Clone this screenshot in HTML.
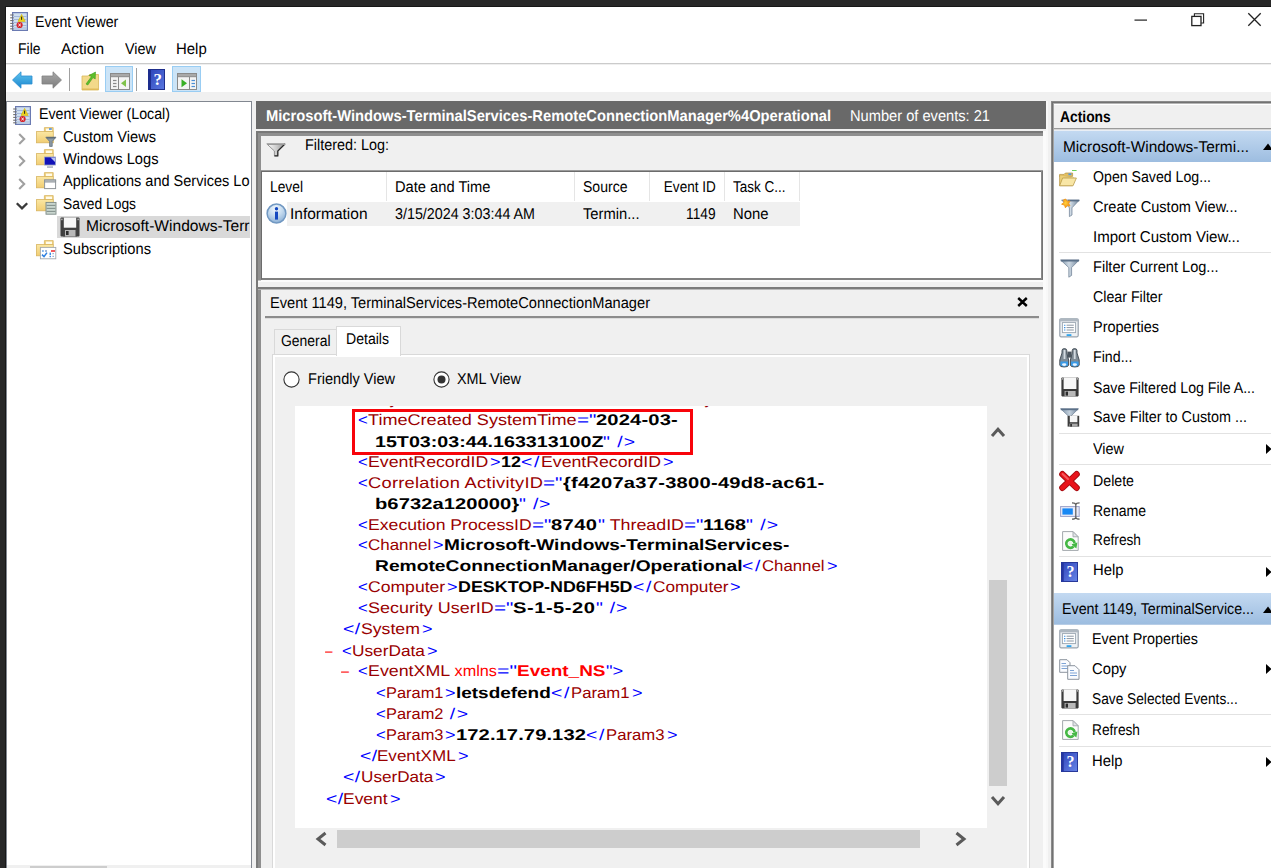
<!DOCTYPE html>
<html><head><meta charset="utf-8"><title>Event Viewer</title>
<style>
html,body{margin:0;padding:0;overflow:hidden}
#w{position:absolute;left:0;top:0;width:1271px;height:868px;overflow:hidden}
body{width:1271px;height:868px;overflow:hidden;background:#282828;position:relative;
 font-family:"Liberation Sans", sans-serif;font-size:15.6px;color:#000}
.b{position:absolute;box-sizing:border-box}
.i{position:absolute;overflow:visible}
.t{position:absolute;white-space:pre;text-rendering:geometricPrecision}
</style></head>
<body>
<div id="w">
<div class="b" style="left:5px;top:6px;width:1266px;height:1px;background:#171717;"></div>
<div class="b" style="left:5px;top:6px;width:1px;height:862px;background:#171717;"></div>
<div class="b" style="left:6px;top:7px;width:1265px;height:85px;background:#ffffff;"></div>
<div class="b" style="left:6px;top:92px;width:1265px;height:776px;background:#f0f0f0;"></div>
<div class="b" style="left:6px;top:63px;width:1265px;height:1px;background:#cbcbcb;"></div>
<div class="b" style="left:6px;top:64px;width:1265px;height:1px;background:#efefef;"></div>
<div class="b" style="left:105px;top:66px;width:28px;height:26px;background:#cce4f7;border:1px solid #99cdf3;"></div>
<div class="b" style="left:172px;top:66px;width:29px;height:26px;background:#cce4f7;border:1px solid #99cdf3;"></div>
<div class="b" style="left:69px;top:68px;width:1px;height:23px;background:#a0a0a0;"></div>
<div class="b" style="left:136px;top:68px;width:1px;height:23px;background:#a0a0a0;"></div>
<div class="b" style="left:6px;top:101px;width:246px;height:770px;background:#ffffff;border:1px solid #828790;"></div>
<div class="b" style="left:57px;top:216px;width:193px;height:22px;background:#d9d9d9;"></div>
<div class="b" style="left:7px;top:865px;width:244px;height:3px;background:#f0f0f0;"></div>
<div class="b" style="left:30px;top:866px;width:77px;height:2px;background:#cdcdcd;"></div>
<div class="b" style="left:256px;top:101px;width:790px;height:28px;background:#696969;"></div>
<div class="b" style="left:1043px;top:131px;width:3px;height:737px;background:#fbfbfb;"></div>
<div class="b" style="left:256px;top:131px;width:787px;height:149px;background:#787878;"></div>
<div class="b" style="left:258px;top:133px;width:785px;height:147px;background:#8f8f8f;"></div>
<div class="b" style="left:261px;top:136px;width:782px;height:144px;background:#f0f0f0;"></div>
<div class="b" style="left:256px;top:280px;width:790px;height:2px;background:#fbfbfb;"></div>
<div class="b" style="left:256px;top:280px;width:2px;height:8px;background:#787878;"></div>
<div class="b" style="left:258px;top:280px;width:3px;height:1px;background:#c4c4c4;"></div>
<div class="b" style="left:261px;top:170px;width:782px;height:110px;background:#ffffff;border:1px solid #6c6c6c;border-bottom-color:#808080;border-right-color:#757575;"></div>
<div class="b" style="left:261px;top:170px;width:782px;height:1px;background:#9a9a9a;"></div>
<div class="b" style="left:262px;top:171px;width:780px;height:1px;background:#6c6c6c;"></div>
<div class="b" style="left:262px;top:278px;width:780px;height:1px;background:#808080;"></div>
<div class="b" style="left:1041px;top:171px;width:1px;height:108px;background:#8a8a8a;"></div>
<div class="b" style="left:386px;top:172px;width:1px;height:29px;background:#e5e5e5;"></div>
<div class="b" style="left:574px;top:172px;width:1px;height:29px;background:#e5e5e5;"></div>
<div class="b" style="left:649px;top:172px;width:1px;height:29px;background:#e5e5e5;"></div>
<div class="b" style="left:724px;top:172px;width:1px;height:29px;background:#e5e5e5;"></div>
<div class="b" style="left:799px;top:172px;width:1px;height:29px;background:#e5e5e5;"></div>
<div class="b" style="left:287px;top:202px;width:513px;height:24px;background:#f0f0f0;"></div>
<div class="b" style="left:256px;top:287px;width:787px;height:590px;background:#7b7b7b;"></div>
<div class="b" style="left:258px;top:289px;width:785px;height:590px;background:#8f8f8f;"></div>
<div class="b" style="left:258px;top:289px;width:785px;height:1px;background:#b2b2b2;"></div>
<div class="b" style="left:261px;top:290px;width:782px;height:590px;background:#f0f0f0;"></div>
<div class="b" style="left:261px;top:289px;width:782px;height:1px;background:#b9b9b9;"></div>
<div class="b" style="left:265px;top:316px;width:774px;height:2px;background:#8c8c8c;"></div>
<div class="b" style="left:265px;top:318px;width:774px;height:1px;background:#dcdcdc;"></div>
<div class="b" style="left:272px;top:354px;width:758px;height:520px;background:#ffffff;border:1px solid #d9d9d9;"></div>
<div class="b" style="left:275px;top:357px;width:752px;height:520px;background:#f0f0f0;"></div>
<div class="b" style="left:274px;top:329px;width:63px;height:25px;background:#f0f0f0;border:1px solid #d9d9d9;border-bottom:none;"></div>
<div class="b" style="left:336px;top:326px;width:65px;height:30px;background:#ffffff;border:1px solid #d9d9d9;border-bottom:none;"></div>
<div class="b" style="left:295px;top:406px;width:692px;height:422px;background:#ffffff;"></div>
<div class="b" style="left:987px;top:406px;width:21px;height:422px;background:#f0f0f0;"></div>
<div class="b" style="left:989px;top:580px;width:18px;height:206px;background:#cdcdcd;"></div>
<div class="b" style="left:295px;top:828px;width:713px;height:21px;background:#f0f0f0;"></div>
<div class="b" style="left:337px;top:830px;width:583px;height:18px;background:#cdcdcd;"></div>
<div class="b" style="left:352px;top:409px;width:341px;height:46px;border:3px solid #f8040a;"></div>
<div class="b" style="left:1046px;top:101px;width:2px;height:767px;background:#f8f8f8;"></div>
<div class="b" style="left:1051px;top:101px;width:230px;height:780px;background:#8a8a8a;"></div>
<div class="b" style="left:1052px;top:102px;width:230px;height:780px;background:#727272;"></div>
<div class="b" style="left:1054px;top:104px;width:230px;height:780px;background:#ffffff;"></div>
<div class="b" style="left:1053px;top:103px;width:1px;height:780px;background:#a4a4a4;"></div>
<div class="b" style="left:1054px;top:103px;width:230px;height:1px;background:#b4b4b4;"></div>
<div class="b" style="left:1054px;top:105px;width:220px;height:23px;background:#f0f0f0;"></div>
<div class="b" style="left:1054px;top:128px;width:220px;height:1px;background:#9a9a9a;"></div>
<div class="b" style="left:1054px;top:129px;width:220px;height:1px;background:#d6d6d6;"></div>
<div class="b" style="left:1054px;top:130px;width:220px;height:1px;background:#e9eef5;"></div>
<div class="b" style="left:1054px;top:131px;width:220px;height:31px;background:linear-gradient(#c3d9f1,#9dbde0);"></div>
<div class="b" style="left:1054px;top:593px;width:220px;height:31px;background:linear-gradient(#c3d9f1,#9dbde0);"></div>
<div class="b" style="left:1054px;top:624px;width:220px;height:1px;background:#b7cde6;"></div>
<div class="b" style="left:1059px;top:252px;width:215px;height:1px;background:#e2e2e2;"></div>
<div class="b" style="left:1059px;top:433px;width:215px;height:1px;background:#e2e2e2;"></div>
<div class="b" style="left:1059px;top:464px;width:215px;height:1px;background:#e2e2e2;"></div>
<div class="b" style="left:1059px;top:556px;width:215px;height:1px;background:#e2e2e2;"></div>
<div class="b" style="left:1059px;top:714px;width:215px;height:1px;background:#e2e2e2;"></div>
<div class="b" style="left:1059px;top:746px;width:215px;height:1px;background:#e2e2e2;"></div>

<svg class="i" style="left:9.6px;top:11.8px" width="18" height="19" viewBox="0 0 18 19">
<rect x="2.6" y="0.6" width="14.8" height="17.8" fill="#cfdff0" stroke="#6a7ab2" stroke-width="1.2"/>
<g stroke="#a3b8da" stroke-width="1"><line x1="4" y1="4.5" x2="16.6" y2="4.5"/><line x1="4" y1="7.5" x2="16.6" y2="7.5"/><line x1="4" y1="10.5" x2="16.6" y2="10.5"/><line x1="4" y1="13.5" x2="16.6" y2="13.5"/><line x1="4" y1="16" x2="16.6" y2="16"/></g>
<g stroke="#6f6f6f" stroke-width="1.1"><line x1="0.2" y1="3" x2="3.6" y2="3"/><line x1="0.2" y1="5.8" x2="3.6" y2="5.8"/><line x1="0.2" y1="8.6" x2="3.6" y2="8.6"/><line x1="0.2" y1="11.4" x2="3.6" y2="11.4"/><line x1="0.2" y1="14.2" x2="3.6" y2="14.2"/><line x1="0.2" y1="16.8" x2="3.6" y2="16.8"/></g>
<path d="M11.6 2.4 L15.2 9.4 L8 9.4 Z" fill="#ecd31f" stroke="#cfb400" stroke-width="0.6" stroke-linejoin="round"/>
<rect x="11.1" y="4.6" width="1" height="3.2" fill="#222"/>
<circle cx="9.6" cy="13" r="3.1" fill="#d6262c"/>
<path d="M8.4 11.8 L10.8 14.2 M10.8 11.8 L8.4 14.2" stroke="#fff" stroke-width="1"/>
</svg>
<svg class="i" style="left:13.4px;top:105.6px" width="18" height="19" viewBox="0 0 18 19">
<rect x="2.6" y="0.6" width="14.8" height="17.8" fill="#cfdff0" stroke="#6a7ab2" stroke-width="1.2"/>
<g stroke="#a3b8da" stroke-width="1"><line x1="4" y1="4.5" x2="16.6" y2="4.5"/><line x1="4" y1="7.5" x2="16.6" y2="7.5"/><line x1="4" y1="10.5" x2="16.6" y2="10.5"/><line x1="4" y1="13.5" x2="16.6" y2="13.5"/><line x1="4" y1="16" x2="16.6" y2="16"/></g>
<g stroke="#6f6f6f" stroke-width="1.1"><line x1="0.2" y1="3" x2="3.6" y2="3"/><line x1="0.2" y1="5.8" x2="3.6" y2="5.8"/><line x1="0.2" y1="8.6" x2="3.6" y2="8.6"/><line x1="0.2" y1="11.4" x2="3.6" y2="11.4"/><line x1="0.2" y1="14.2" x2="3.6" y2="14.2"/><line x1="0.2" y1="16.8" x2="3.6" y2="16.8"/></g>
<path d="M11.6 2.4 L15.2 9.4 L8 9.4 Z" fill="#ecd31f" stroke="#cfb400" stroke-width="0.6" stroke-linejoin="round"/>
<rect x="11.1" y="4.6" width="1" height="3.2" fill="#222"/>
<circle cx="9.6" cy="13" r="3.1" fill="#d6262c"/>
<path d="M8.4 11.8 L10.8 14.2 M10.8 11.8 L8.4 14.2" stroke="#fff" stroke-width="1"/>
</svg>
<svg class="i" style="left:1134.4px;top:13.4px" width="13" height="13" viewBox="0 0 13 13"><rect x="0.5" y="6.5" width="12.5" height="1.2" fill="#222"/></svg>
<svg class="i" style="left:1190.8px;top:13px" width="14" height="14" viewBox="0 0 14 14"><path d="M3.4 3.2 V0.8 H12.6 V10 H10.2" fill="none" stroke="#222" stroke-width="1.1"/>
<rect x="0.8" y="3.4" width="9.2" height="9.2" fill="none" stroke="#222" stroke-width="1.3"/></svg>
<svg class="i" style="left:1248px;top:13px" width="13" height="13" viewBox="0 0 13 13"><path d="M0.3 0.3 L12.7 12.7 M12.7 0.3 L0.3 12.7" stroke="#222" stroke-width="1.3"/></svg>
<svg class="i" style="left:12px;top:71px" width="21" height="18" viewBox="0 0 21 18"><defs><linearGradient id="gb" x1="0" y1="0" x2="0" y2="1"><stop offset="0" stop-color="#5fc4ee"/><stop offset="1" stop-color="#1b86cf"/></linearGradient></defs>
<path d="M0.5 9 L9 0.8 V5 H20 V13 H9 V17.2 Z" fill="url(#gb)" stroke="#2b8ed0" stroke-width="0.8" stroke-linejoin="round"/></svg>
<svg class="i" style="left:41px;top:71px" width="21" height="18" viewBox="0 0 21 18"><defs><linearGradient id="gf" x1="0" y1="0" x2="0" y2="1"><stop offset="0" stop-color="#a8a8a8"/><stop offset="1" stop-color="#7d7d7d"/></linearGradient></defs>
<path d="M20.5 9 L12 0.8 V5 H1 V13 H12 V17.2 Z" fill="url(#gf)" stroke="#808080" stroke-width="0.8" stroke-linejoin="round"/></svg>
<svg class="i" style="left:80.5px;top:69.6px" width="19" height="21" viewBox="0 0 19 21"><path d="M1 6 H7 L8.5 4.5 H17.5 V20 H1 Z" fill="#f3d98a" stroke="#d9b95c" stroke-width="0.8"/>
<path d="M1 18.5 H17.5 V20 H1 Z" fill="#e0bb5a"/>
<path d="M5 14 L10.5 6.5 L8 5.5 L14.5 2 L14.2 9 L12 7.6 L6.8 15 Z" fill="#5cbf2a" stroke="#3f9a1c" stroke-width="0.6"/></svg>
<svg class="i" style="left:109.6px;top:72.6px" width="20" height="17" viewBox="0 0 20 17"><rect x="0.5" y="0.5" width="19" height="16" fill="#f4f4f4" stroke="#8a8a8a"/>
<rect x="0.5" y="0.5" width="19" height="3.2" fill="#a9a9a9" stroke="#8a8a8a"/>
<line x1="8.5" y1="4" x2="8.5" y2="16" stroke="#8a8a8a"/>
<g stroke="#8a8a8a" stroke-width="1.2"><line x1="3" y1="7.5" x2="6.5" y2="7.5"/><line x1="3" y1="10.5" x2="6.5" y2="10.5"/><line x1="3" y1="13.5" x2="6.5" y2="13.5"/></g>
<path d="M16 6.5 V14 L11 10.2 Z" fill="#7fc24a"/></svg>
<svg class="i" style="left:148px;top:69px" width="17" height="21" viewBox="0 0 17 21"><defs><linearGradient id="gh" x1="0" y1="0" x2="1" y2="1"><stop offset="0" stop-color="#2a42b8"/><stop offset="1" stop-color="#5a78e0"/></linearGradient></defs>
<rect x="0.5" y="0.5" width="16" height="20" fill="url(#gh)" stroke="#1f2f8c"/>
<rect x="0.5" y="0.5" width="2.5" height="20" fill="#1c2c8e"/>
<text x="9.8" y="16.4" font-family="Liberation Serif, serif" font-weight="700" font-size="17" fill="#fff" text-anchor="middle">?</text></svg>
<svg class="i" style="left:177px;top:72.6px" width="20" height="17" viewBox="0 0 20 17"><rect x="0.5" y="0.5" width="19" height="16" fill="#f4f4f4" stroke="#8a8a8a"/>
<rect x="0.5" y="0.5" width="19" height="3.2" fill="#a9a9a9" stroke="#8a8a8a"/>
<line x1="12.5" y1="4" x2="12.5" y2="16" stroke="#8a8a8a"/>
<g stroke="#4b8fd6" stroke-width="1.2"><line x1="14.5" y1="7.5" x2="18" y2="7.5"/><line x1="14.5" y1="10.5" x2="18" y2="10.5"/><line x1="14.5" y1="13.5" x2="18" y2="13.5"/></g>
<path d="M4.5 6.2 V14.2 L10 10.2 Z" fill="#39b026"/></svg>
<svg class="i" style="left:18px;top:132.5px" width="8" height="12" viewBox="0 0 8 12"><path d="M1.2 1 L6.2 6 L1.2 11" fill="none" stroke="#a0a0a0" stroke-width="2.1"/></svg>
<svg class="i" style="left:18px;top:155.2px" width="8" height="12" viewBox="0 0 8 12"><path d="M1.2 1 L6.2 6 L1.2 11" fill="none" stroke="#a0a0a0" stroke-width="2.1"/></svg>
<svg class="i" style="left:18px;top:178px" width="8" height="12" viewBox="0 0 8 12"><path d="M1.2 1 L6.2 6 L1.2 11" fill="none" stroke="#a0a0a0" stroke-width="2.1"/></svg>
<svg class="i" style="left:15.6px;top:201.6px" width="12" height="8" viewBox="0 0 12 8"><path d="M0.8 1.2 L6 6.4 L11.2 1.2" fill="none" stroke="#3a3a3a" stroke-width="2.3"/></svg>
<svg class="i" style="left:36px;top:127px" width="22" height="21" viewBox="0 0 22 21"><defs><linearGradient id="gfo" x1="0" y1="0" x2="0" y2="1"><stop offset="0" stop-color="#fbe7a3"/><stop offset="1" stop-color="#f1cd72"/></linearGradient></defs>
<path d="M8.4 4.6 V0.6 H17.2 V4.6 Z" fill="#f1d384" stroke="#d8b560" stroke-width="0.8"/>
<rect x="10" y="1.6" width="6" height="2.6" fill="#fffbea"/>
<rect x="0.4" y="4.6" width="16.9" height="11.2" fill="url(#gfo)" stroke="#d8b560" stroke-width="0.8"/><rect x="13" y="1.2" width="2.8" height="1.6" fill="#4f8fe0"/>
<path d="M9.8 10.2 H20 L16.2 14.4 V19.4 H13.6 V14.4 Z" fill="#8c9aa6" stroke="#66747f" stroke-width="0.8" stroke-linejoin="round"/>
<path d="M10.5 10.8 H19.4" stroke="#5a6873" stroke-width="1.3"/></svg>
<svg class="i" style="left:36px;top:149.4px" width="22" height="22" viewBox="0 0 22 22"><defs><linearGradient id="gfo" x1="0" y1="0" x2="0" y2="1"><stop offset="0" stop-color="#fbe7a3"/><stop offset="1" stop-color="#f1cd72"/></linearGradient></defs>
<path d="M8.4 4.6 V0.6 H17.2 V4.6 Z" fill="#f1d384" stroke="#d8b560" stroke-width="0.8"/>
<rect x="10" y="1.6" width="6" height="2.6" fill="#fffbea"/>
<rect x="0.4" y="4.6" width="16.9" height="11.2" fill="url(#gfo)" stroke="#d8b560" stroke-width="0.8"/>
<rect x="8.6" y="8" width="10.8" height="8" fill="#1212b8" stroke="#8f9cc8" stroke-width="0.8"/>
<path d="M14.5 8.4 H19 V13 Z" fill="#b9c4f2"/>
<rect x="11" y="17.4" width="6" height="1.3" fill="#9aa3b5"/></svg>
<svg class="i" style="left:36px;top:172px" width="22" height="21" viewBox="0 0 22 21"><defs><linearGradient id="gfo" x1="0" y1="0" x2="0" y2="1"><stop offset="0" stop-color="#fbe7a3"/><stop offset="1" stop-color="#f1cd72"/></linearGradient></defs>
<path d="M8.4 4.6 V0.6 H17.2 V4.6 Z" fill="#f1d384" stroke="#d8b560" stroke-width="0.8"/>
<rect x="10" y="1.6" width="6" height="2.6" fill="#fffbea"/>
<rect x="0.4" y="4.6" width="16.9" height="11.2" fill="url(#gfo)" stroke="#d8b560" stroke-width="0.8"/>
<rect x="8.6" y="8" width="11" height="8.6" fill="#ffffff" stroke="#8e9499" stroke-width="1"/>
<rect x="8.6" y="8" width="11" height="2" fill="#c4cace" stroke="#8e9499" stroke-width="1"/></svg>
<svg class="i" style="left:36px;top:195px" width="22" height="22" viewBox="0 0 22 22"><defs><linearGradient id="gfo" x1="0" y1="0" x2="0" y2="1"><stop offset="0" stop-color="#fbe7a3"/><stop offset="1" stop-color="#f1cd72"/></linearGradient></defs>
<path d="M8.4 4.6 V0.6 H17.2 V4.6 Z" fill="#f1d384" stroke="#d8b560" stroke-width="0.8"/>
<rect x="10" y="1.6" width="6" height="2.6" fill="#fffbea"/>
<rect x="0.4" y="4.6" width="16.9" height="11.2" fill="url(#gfo)" stroke="#d8b560" stroke-width="0.8"/>
<rect x="10" y="7.4" width="10" height="11.8" fill="#c9d6cf" stroke="#7d8a86" stroke-width="0.9"/>
<g stroke="#85938e" stroke-width="1.1"><line x1="10.6" y1="10.4" x2="19.4" y2="10.4"/><line x1="10.6" y1="13.4" x2="19.4" y2="13.4"/><line x1="10.6" y1="16.4" x2="19.4" y2="16.4"/></g></svg>
<svg class="i" style="left:59.6px;top:217.2px" width="20" height="20" viewBox="0 0 20 20"><rect x="0.5" y="0.5" width="19" height="19" rx="1" fill="#3f3f3f"/>
<rect x="3.8" y="0.5" width="12.4" height="10.2" fill="#f6f6f6"/>
<rect x="3.2" y="12.6" width="13.6" height="6.9" fill="#454545"/>
<rect x="5" y="13" width="10.5" height="6.5" fill="#b8b8b8"/>
<rect x="6" y="14" width="2.6" height="4" fill="#2e2e2e"/>
<rect x="1.3" y="1.6" width="1.2" height="1.6" fill="#cfcfcf"/><rect x="17.5" y="1.6" width="1.2" height="1.6" fill="#cfcfcf"/></svg>
<svg class="i" style="left:36px;top:240.4px" width="22" height="22" viewBox="0 0 22 22"><defs><linearGradient id="gfo" x1="0" y1="0" x2="0" y2="1"><stop offset="0" stop-color="#fbe7a3"/><stop offset="1" stop-color="#f1cd72"/></linearGradient></defs>
<path d="M8.4 4.6 V0.6 H17.2 V4.6 Z" fill="#f1d384" stroke="#d8b560" stroke-width="0.8"/>
<rect x="10" y="1.6" width="6" height="2.6" fill="#fffbea"/>
<rect x="0.4" y="4.6" width="16.9" height="11.2" fill="url(#gfo)" stroke="#d8b560" stroke-width="0.8"/>
<rect x="4.4" y="7.4" width="15.4" height="11.4" fill="#ffffff" stroke="#a3a8ad" stroke-width="0.9"/>
<rect x="15" y="10.2" width="4" height="1.6" fill="#ee3338"/>
<rect x="6" y="10.4" width="1.8" height="1.2" fill="#3a8ae0"/><rect x="9" y="10.4" width="2" height="1.2" fill="#5e86c0"/>
<path d="M6 14.6 L8 16.6 L11 12.6" fill="none" stroke="#2c7fe0" stroke-width="1.5"/>
<rect x="13.6" y="12.6" width="1.3" height="2.6" fill="#2c7fe0"/><rect x="13.6" y="16" width="1.3" height="1.2" fill="#2c7fe0"/>
<rect x="16.4" y="13" width="1.6" height="1.2" fill="#9db4d6"/><rect x="16.4" y="15.8" width="1.6" height="1.2" fill="#9db4d6"/></svg>
<svg class="i" style="left:265.8px;top:143.2px" width="20" height="14" viewBox="0 0 20 14"><defs><linearGradient id="gfl" x1="0" y1="0" x2="1" y2="0"><stop offset="0" stop-color="#ffffff"/><stop offset="0.55" stop-color="#c9c9c9"/><stop offset="1" stop-color="#8a8a8a"/></linearGradient></defs>
<path d="M0.8 0.9 H19.2 L11.8 8 V12.8 H8.4 V8 Z" fill="url(#gfl)" stroke="#8a8a8a" stroke-width="0.9" stroke-linejoin="round"/>
<path d="M19 1 L11.8 8 V12.8 H8.4" fill="none" stroke="#2a2a2a" stroke-width="1.2"/>
<path d="M1 1.3 H19" stroke="#9a9a9a" stroke-width="1.4"/></svg>
<svg class="i" style="left:266.4px;top:203.2px" width="21" height="21" viewBox="0 0 21 21"><defs><radialGradient id="gi" cx="0.45" cy="0.25" r="0.85"><stop offset="0" stop-color="#f2f8fd"/><stop offset="0.45" stop-color="#c3d9ee"/><stop offset="1" stop-color="#7fa6cf"/></radialGradient></defs>
<circle cx="10.5" cy="10.5" r="9.4" fill="url(#gi)" stroke="#7198c2" stroke-width="1.5"/>
<circle cx="10.5" cy="5.8" r="1.7" fill="#1448c0"/>
<rect x="9" y="8.6" width="3" height="8" fill="#1448c0"/></svg>
<svg class="i" style="left:1017px;top:297px" width="11" height="10" viewBox="0 0 11 10"><path d="M1.2 1 L9.8 9 M9.8 1 L1.2 9" stroke="#000" stroke-width="2.4"/></svg>
<svg class="i" style="left:283px;top:371px" width="17" height="17" viewBox="0 0 17 17"><circle cx="8.5" cy="8.5" r="7.6" fill="#fff" stroke="#333" stroke-width="1.1"/></svg>
<svg class="i" style="left:433px;top:371px" width="17" height="17" viewBox="0 0 17 17"><circle cx="8.5" cy="8.5" r="7.6" fill="#fff" stroke="#333" stroke-width="1.1"/><circle cx="8.5" cy="8.5" r="4" fill="#333"/></svg>
<svg class="i" style="left:991px;top:427px" width="14" height="10" viewBox="0 0 14 10"><path d="M1 9 L7 2.2 L13 9" fill="none" stroke="#5a5a5a" stroke-width="3"/></svg>
<svg class="i" style="left:991px;top:796px" width="14" height="10" viewBox="0 0 14 10"><path d="M1 1 L7 7.8 L13 1" fill="none" stroke="#5a5a5a" stroke-width="3"/></svg>
<svg class="i" style="left:315px;top:832px" width="12" height="14" viewBox="0 0 12 14"><path d="M10.5 1 L3 7 L10.5 13" fill="none" stroke="#5a5a5a" stroke-width="3"/></svg>
<svg class="i" style="left:955px;top:832px" width="12" height="14" viewBox="0 0 12 14"><path d="M1.5 1 L9 7 L1.5 13" fill="none" stroke="#5a5a5a" stroke-width="3"/></svg>
<svg class="i" style="left:1059.4px;top:170px" width="18" height="17" viewBox="0 0 18 17"><rect x="13" y="0" width="4.6" height="0.9" fill="#58d04a"/>
<path d="M0.6 4.4 H5 L6.4 3 H13.6 V6.4 H0.6 Z" fill="#e3c062" stroke="#b39140" stroke-width="0.7"/>
<rect x="9.4" y="3.4" width="3" height="1.8" fill="#4f97e6"/>
<path d="M0.6 5.4 V15.6 H13 L14.6 7.6" fill="#ecd078" stroke="#b39140" stroke-width="0.7"/>
<path d="M0.6 15.8 L3.6 8 H17.4 L14 15.8 Z" fill="#f8e6a6" stroke="#b99a48" stroke-width="0.8" stroke-linejoin="round"/></svg>
<svg class="i" style="left:1060.4px;top:199px" width="20" height="19" viewBox="0 0 20 19"><defs><linearGradient id="gfs" x1="0" y1="0" x2="1" y2="0"><stop offset="0" stop-color="#7a90a6"/><stop offset="0.5" stop-color="#cfdae4"/><stop offset="1" stop-color="#6d8299"/></linearGradient>
<radialGradient id="gst" cx="0.45" cy="0.45" r="0.6"><stop offset="0" stop-color="#ffd23a"/><stop offset="1" stop-color="#f28a12"/></radialGradient></defs>
<path d="M1.6 1 H19.4 L12 8.8 V16 L9.4 17.6 V8.8 Z" fill="url(#gfs)" stroke="#6a7d92" stroke-width="0.7" stroke-linejoin="round"/>
<path d="M8 1.6 H19.2" stroke="#5b7088" stroke-width="1.6"/>
<path d="M5.6 0 L7.2 2.2 L10 2 L8.6 4.4 L10 7 L7.2 6.6 L5.4 8.8 L4.6 6.2 L1.6 5.2 L4 3.6 L3.6 0.8 Z" fill="url(#gst)" stroke="#f2981c" stroke-width="0.9" stroke-linejoin="round"/></svg>
<svg class="i" style="left:1059.6px;top:258.8px" width="20" height="19" viewBox="0 0 20 19"><defs><linearGradient id="gfn" x1="0" y1="0" x2="1" y2="0"><stop offset="0" stop-color="#7a90a6"/><stop offset="0.45" stop-color="#cfdae4"/><stop offset="1" stop-color="#6d8299"/></linearGradient></defs>
<path d="M0.6 1 H19.2 L11.6 8.6 V16.4 L8.8 18.2 V8.6 Z" fill="url(#gfn)" stroke="#6a7d92" stroke-width="0.7" stroke-linejoin="round"/>
<path d="M0.8 1.6 H19" stroke="#5b7088" stroke-width="1.8"/></svg>
<svg class="i" style="left:1059.4px;top:318px" width="20" height="20" viewBox="0 0 20 20"><rect x="0.8" y="0.8" width="18.4" height="18" rx="1.2" fill="#eef1f4" stroke="#98a2ad" stroke-width="1.2"/>
<rect x="0.8" y="0.8" width="18.4" height="2.6" fill="#aeb7c0"/>
<rect x="3.4" y="4.6" width="13.2" height="10" fill="#ffffff" stroke="#9aa5b1" stroke-width="0.9"/>
<g stroke="#8a96a3" stroke-width="1"><line x1="7.6" y1="7.2" x2="14.8" y2="7.2"/><line x1="7.6" y1="9.6" x2="14.8" y2="9.6"/><line x1="7.6" y1="12" x2="14.8" y2="12"/></g>
<g stroke="#3a8ee0" stroke-width="1.1"><line x1="5" y1="7.2" x2="6.4" y2="7.2"/><line x1="5" y1="9.6" x2="6.4" y2="9.6"/><line x1="5" y1="12" x2="6.4" y2="12"/></g>
<rect x="7.6" y="16.2" width="4.8" height="1.8" fill="#2fa4ee"/></svg>
<svg class="i" style="left:1059.4px;top:347.8px" width="21" height="20" viewBox="0 0 21 20"><g fill="#7f8b95" stroke="#3b454e" stroke-width="0.9">
<path d="M3 2.6 Q3 0.6 5.4 0.6 Q7.8 0.6 7.8 2.6 V5 L9.6 12 V17 Q9.6 19 5.2 19 Q0.8 19 0.8 17 V12 L3 5 Z"/>
<path d="M13.2 2.6 Q13.2 0.6 15.6 0.6 Q18 0.6 18 2.6 V5 L20.2 12 V17 Q20.2 19 15.8 19 Q11.4 19 11.4 17 V12 L13.2 5 Z"/></g>
<rect x="8.4" y="3.6" width="4.2" height="6" fill="#4b555e"/>
<rect x="4.6" y="2" width="1.8" height="9" fill="#d4dbe1"/><rect x="14.8" y="2" width="1.8" height="9" fill="#d4dbe1"/>
<path d="M1.4 13.6 H9 V17 Q9 18.4 5.2 18.4 Q1.4 18.4 1.4 17 Z" fill="#3a9be8"/><path d="M12 13.6 H19.6 V17 Q19.6 18.4 15.8 18.4 Q12 18.4 12 17 Z" fill="#3a9be8"/>
<ellipse cx="5.2" cy="16.6" rx="2.2" ry="1.3" fill="#e9f4ff"/><ellipse cx="15.8" cy="16.6" rx="2.2" ry="1.3" fill="#e9f4ff"/></svg>
<svg class="i" style="left:1061px;top:377.4px" width="18" height="20" viewBox="0 0 18 20"><rect x="0.4" y="0.4" width="17.2" height="19" rx="0.8" fill="#3a3a3a"/>
<rect x="2.6" y="0.4" width="12.8" height="11.6" fill="#f7f7f7"/>
<rect x="3.6" y="14" width="11" height="5.4" fill="#b9b9b9"/>
<rect x="4.6" y="14.6" width="2.4" height="4" fill="#2c2c2c"/>
<rect x="0.9" y="1.2" width="1" height="1.4" fill="#d0d0d0"/><rect x="16.1" y="1.2" width="1" height="1.4" fill="#d0d0d0"/></svg>
<svg class="i" style="left:1059.8px;top:408px" width="20" height="19" viewBox="0 0 20 19"><defs><linearGradient id="gfv" x1="0" y1="0" x2="1" y2="0"><stop offset="0" stop-color="#7a90a6"/><stop offset="0.5" stop-color="#c3d0dc"/><stop offset="1" stop-color="#6d8299"/></linearGradient></defs>
<path d="M0.6 0.8 H18.4 L11 8 V11 H8.4 V8 Z" fill="url(#gfv)" stroke="#6a7d92" stroke-width="0.7"/>
<path d="M0.8 1.4 H18.2" stroke="#5b7088" stroke-width="1.6"/>
<rect x="7.6" y="7.8" width="11.6" height="10.8" fill="#3c3c3c"/>
<rect x="9.8" y="7.8" width="7.6" height="6.4" fill="#f6f6f6"/>
<rect x="9.4" y="15.6" width="8.2" height="3" fill="#a8a8a8"/>
<rect x="10.2" y="16" width="1.8" height="2.6" fill="#333"/></svg>
<svg class="i" style="left:1059px;top:470.8px" width="21" height="20" viewBox="0 0 21 20"><path d="M3.4 3.2 L17.6 16.8 M17.6 3.2 L3.4 16.8" stroke="#a50d12" stroke-width="6.4" stroke-linecap="round"/>
<path d="M3.4 3.2 L17.6 16.8 M17.6 3.2 L3.4 16.8" stroke="#e8141b" stroke-width="4.6" stroke-linecap="round"/>
<path d="M3.6 3 L9 8" stroke="#f45a5e" stroke-width="2" stroke-linecap="round"/></svg>
<svg class="i" style="left:1059.6px;top:501.6px" width="21" height="18" viewBox="0 0 21 18"><rect x="0.6" y="4.6" width="18.6" height="9.8" fill="#e9ebfa" stroke="#9aa0c8" stroke-width="1"/>
<rect x="2.4" y="6.4" width="10.4" height="6.2" fill="#1788f4"/>
<path d="M12 0.8 Q15.4 0.8 15.8 2.6 Q16.2 0.8 19.6 0.8 M15.8 2.4 V15.6 M12 17.2 Q15.4 17.2 15.8 15.4 Q16.2 17.2 19.6 17.2" stroke="#5a5a5a" stroke-width="1.2" fill="none"/></svg>
<svg class="i" style="left:1062px;top:530.8px" width="17" height="20" viewBox="0 0 17 20"><path d="M0.6 0.6 H11 L16.2 5.8 V19.4 H0.6 Z" fill="#fcfcfc" stroke="#a3a8ad" stroke-width="1"/>
<path d="M11 0.6 V5.8 H16.2 Z" fill="#e1e4e7" stroke="#a3a8ad" stroke-width="0.9"/>
<path d="M11.6 15.4 A4.2 4.2 0 1 1 12.6 12" fill="none" stroke="#45b845" stroke-width="2.7"/>
<path d="M9.2 13.2 L15.4 11.4 L14.4 17.4 Z" fill="#45b845"/>
<circle cx="8.4" cy="12.2" r="2" fill="#e8f6e6"/></svg>
<svg class="i" style="left:1060.6px;top:562px" width="17" height="20" viewBox="0 0 17 20"><defs><linearGradient id="ghq" x1="0" y1="0" x2="1" y2="1"><stop offset="0" stop-color="#2a42b8"/><stop offset="1" stop-color="#6a86e8"/></linearGradient></defs>
<rect x="0.5" y="0.5" width="16" height="19" fill="url(#ghq)" stroke="#27389a"/>
<rect x="0.5" y="0.5" width="2.2" height="19" fill="#2436a0"/>
<text x="9.4" y="15.4" font-family="Liberation Serif, serif" font-weight="700" font-size="16" fill="#fff" text-anchor="middle">?</text></svg>
<svg class="i" style="left:1059.4px;top:629px" width="20" height="20" viewBox="0 0 20 20"><rect x="0.8" y="0.8" width="18.4" height="18" rx="1.2" fill="#eef1f4" stroke="#98a2ad" stroke-width="1.2"/>
<rect x="0.8" y="0.8" width="18.4" height="2.6" fill="#aeb7c0"/>
<rect x="3.4" y="4.6" width="13.2" height="10" fill="#ffffff" stroke="#9aa5b1" stroke-width="0.9"/>
<g stroke="#8a96a3" stroke-width="1"><line x1="7.6" y1="7.2" x2="14.8" y2="7.2"/><line x1="7.6" y1="9.6" x2="14.8" y2="9.6"/><line x1="7.6" y1="12" x2="14.8" y2="12"/></g>
<g stroke="#3a8ee0" stroke-width="1.1"><line x1="5" y1="7.2" x2="6.4" y2="7.2"/><line x1="5" y1="9.6" x2="6.4" y2="9.6"/><line x1="5" y1="12" x2="6.4" y2="12"/></g>
<rect x="7.6" y="16.2" width="4.8" height="1.8" fill="#2fa4ee"/></svg>
<svg class="i" style="left:1059px;top:659px" width="21" height="21" viewBox="0 0 21 21"><path d="M0.7 0.7 H8 L11 3.7 V13.3 H0.7 Z" fill="#fafcff" stroke="#8c949e" stroke-width="1"/>
<g stroke="#7fa4d6" stroke-width="1"><line x1="2.5" y1="4.5" x2="7" y2="4.5"/><line x1="2.5" y1="7" x2="9" y2="7"/><line x1="2.5" y1="9.5" x2="9" y2="9.5"/></g>
<path d="M8.7 6.7 H16 L20 10.7 V20.3 H8.7 Z" fill="#fafcff" stroke="#8c949e" stroke-width="1"/>
<g stroke="#7fa4d6" stroke-width="1"><line x1="11" y1="11.5" x2="15" y2="11.5"/><line x1="11" y1="14" x2="18" y2="14"/><line x1="11" y1="16.5" x2="18" y2="16.5"/></g></svg>
<svg class="i" style="left:1061px;top:688.6px" width="18" height="20" viewBox="0 0 18 20"><rect x="0.4" y="0.4" width="17.2" height="19" rx="0.8" fill="#3a3a3a"/>
<rect x="2.6" y="0.4" width="12.8" height="11.6" fill="#f7f7f7"/>
<rect x="3.6" y="14" width="11" height="5.4" fill="#b9b9b9"/>
<rect x="4.6" y="14.6" width="2.4" height="4" fill="#2c2c2c"/>
<rect x="0.9" y="1.2" width="1" height="1.4" fill="#d0d0d0"/><rect x="16.1" y="1.2" width="1" height="1.4" fill="#d0d0d0"/></svg>
<svg class="i" style="left:1062px;top:720.4px" width="17" height="20" viewBox="0 0 17 20"><path d="M0.6 0.6 H11 L16.2 5.8 V19.4 H0.6 Z" fill="#fcfcfc" stroke="#a3a8ad" stroke-width="1"/>
<path d="M11 0.6 V5.8 H16.2 Z" fill="#e1e4e7" stroke="#a3a8ad" stroke-width="0.9"/>
<path d="M11.6 15.4 A4.2 4.2 0 1 1 12.6 12" fill="none" stroke="#45b845" stroke-width="2.7"/>
<path d="M9.2 13.2 L15.4 11.4 L14.4 17.4 Z" fill="#45b845"/>
<circle cx="8.4" cy="12.2" r="2" fill="#e8f6e6"/></svg>
<svg class="i" style="left:1060.6px;top:751.6px" width="17" height="20" viewBox="0 0 17 20"><defs><linearGradient id="ghq" x1="0" y1="0" x2="1" y2="1"><stop offset="0" stop-color="#2a42b8"/><stop offset="1" stop-color="#6a86e8"/></linearGradient></defs>
<rect x="0.5" y="0.5" width="16" height="19" fill="url(#ghq)" stroke="#27389a"/>
<rect x="0.5" y="0.5" width="2.2" height="19" fill="#2436a0"/>
<text x="9.4" y="15.4" font-family="Liberation Serif, serif" font-weight="700" font-size="16" fill="#fff" text-anchor="middle">?</text></svg>
<svg class="i" style="left:1263px;top:143.4px" width="10" height="7" viewBox="0 0 10 7"><path d="M0 7 L5 0.5 L10 7 Z" fill="#000"/></svg>
<svg class="i" style="left:1263px;top:605.6px" width="10" height="7" viewBox="0 0 10 7"><path d="M0 7 L5 0.5 L10 7 Z" fill="#000"/></svg>
<svg class="i" style="left:1266px;top:444px" width="6" height="10" viewBox="0 0 6 10"><path d="M0 0 L5.5 5 L0 10 Z" fill="#000"/></svg>
<svg class="i" style="left:1266px;top:567px" width="6" height="10" viewBox="0 0 6 10"><path d="M0 0 L5.5 5 L0 10 Z" fill="#000"/></svg>
<svg class="i" style="left:1266px;top:664px" width="6" height="10" viewBox="0 0 6 10"><path d="M0 0 L5.5 5 L0 10 Z" fill="#000"/></svg>
<svg class="i" style="left:1266px;top:757px" width="6" height="10" viewBox="0 0 6 10"><path d="M0 0 L5.5 5 L0 10 Z" fill="#000"/></svg>
<div class="t" id="t0" style="top:13.09px;font-size:15.6px;color:#000;line-height:20px;height:20px;left:35.3px;transform:scaleX(0.9095);transform-origin:0 50%;">Event Viewer</div>
<div class="t" id="t1" style="top:40.09px;font-size:15.6px;color:#000;line-height:20px;height:20px;left:18.4px;transform:scaleX(0.8950);transform-origin:0 50%;">File</div>
<div class="t" id="t2" style="top:40.09px;font-size:15.6px;color:#000;line-height:20px;height:20px;left:61.3px;transform:scaleX(0.9921);transform-origin:0 50%;">Action</div>
<div class="t" id="t3" style="top:40.09px;font-size:15.6px;color:#000;line-height:20px;height:20px;left:124.7px;transform:scaleX(0.9245);transform-origin:0 50%;">View</div>
<div class="t" id="t4" style="top:40.09px;font-size:15.6px;color:#000;line-height:20px;height:20px;left:176.3px;transform:scaleX(0.9570);transform-origin:0 50%;">Help</div>
<div class="t" id="t5" style="top:105.09px;font-size:15.6px;color:#000;line-height:20px;height:20px;left:38.75px;transform:scaleX(0.9123);transform-origin:0 50%;">Event Viewer (Local)</div>
<div class="t" id="t6" style="top:128.09px;font-size:15.6px;color:#000;line-height:20px;height:20px;left:62.5px;transform:scaleX(0.9358);transform-origin:0 50%;">Custom Views</div>
<div class="t" id="t7" style="top:150.09px;font-size:15.6px;color:#000;line-height:20px;height:20px;left:62.5px;transform:scaleX(0.9418);transform-origin:0 50%;">Windows Logs</div>
<div class="t" id="t8" style="top:172.09px;font-size:15.6px;color:#000;line-height:20px;height:20px;left:62.5px;transform:scaleX(0.9313);transform-origin:0 50%;">Applications and Services Lo</div>
<div class="t" id="t9" style="top:195.09px;font-size:15.6px;color:#000;line-height:20px;height:20px;left:62.5px;transform:scaleX(0.8862);transform-origin:0 50%;">Saved Logs</div>
<div class="t" id="t10" style="top:217.09px;font-size:15.6px;color:#000;line-height:20px;height:20px;left:86px;transform:scaleX(0.9985);transform-origin:0 50%;">Microsoft-Windows-Terr</div>
<div class="t" id="t11" style="top:240.09px;font-size:15.6px;color:#000;line-height:20px;height:20px;left:62.5px;transform:scaleX(0.9401);transform-origin:0 50%;">Subscriptions</div>
<div class="t" id="t12" style="top:107.09px;font-size:15.6px;color:#fff;line-height:20px;height:20px;font-weight:700;left:265.5px;transform:scaleX(0.9443);transform-origin:0 50%;">Microsoft-Windows-TerminalServices-RemoteConnectionManager%4Operational</div>
<div class="t" id="t13" style="top:107.09px;font-size:15.6px;color:#fff;line-height:20px;height:20px;left:850px;transform:scaleX(0.9390);transform-origin:0 50%;">Number of events: 21</div>
<div class="t" id="t14" style="top:136.09px;font-size:15.6px;color:#000;line-height:20px;height:20px;left:305px;transform:scaleX(0.9229);transform-origin:0 50%;">Filtered: Log:</div>
<div class="t" id="t15" style="top:178.09px;font-size:15.6px;color:#000;line-height:20px;height:20px;left:270px;transform:scaleX(0.8852);transform-origin:0 50%;">Level</div>
<div class="t" id="t16" style="top:178.09px;font-size:15.6px;color:#000;line-height:20px;height:20px;left:395px;transform:scaleX(0.9416);transform-origin:0 50%;">Date and Time</div>
<div class="t" id="t17" style="top:178.09px;font-size:15.6px;color:#000;line-height:20px;height:20px;left:582.5px;transform:scaleX(0.9004);transform-origin:0 50%;">Source</div>
<div class="t" id="t18" style="top:178.09px;font-size:15.6px;color:#000;line-height:20px;height:20px;right:555px;transform:scaleX(0.8694);transform-origin:100% 50%;">Event ID</div>
<div class="t" id="t19" style="top:178.09px;font-size:15.6px;color:#000;line-height:20px;height:20px;left:732.5px;transform:scaleX(0.8655);transform-origin:0 50%;">Task C...</div>
<div class="t" id="t20" style="top:205.09px;font-size:15.6px;color:#000;line-height:20px;height:20px;left:290px;transform:scaleX(0.9934);transform-origin:0 50%;">Information</div>
<div class="t" id="t21" style="top:205.09px;font-size:15.6px;color:#000;line-height:20px;height:20px;left:395px;transform:scaleX(0.9174);transform-origin:0 50%;">3/15/2024 3:03:44 AM</div>
<div class="t" id="t22" style="top:205.09px;font-size:15.6px;color:#000;line-height:20px;height:20px;left:583px;transform:scaleX(0.9449);transform-origin:0 50%;">Termin...</div>
<div class="t" id="t23" style="top:205.09px;font-size:15.6px;color:#000;line-height:20px;height:20px;right:555px;transform:scaleX(0.8794);transform-origin:100% 50%;">1149</div>
<div class="t" id="t24" style="top:205.09px;font-size:15.6px;color:#000;line-height:20px;height:20px;left:732.5px;transform:scaleX(0.9522);transform-origin:0 50%;">None</div>
<div class="t" id="t25" style="top:294.09px;font-size:15.6px;color:#000;line-height:20px;height:20px;left:269.5px;transform:scaleX(0.9381);transform-origin:0 50%;">Event 1149, TerminalServices-RemoteConnectionManager</div>
<div class="t" id="t26" style="top:332.09px;font-size:15.6px;color:#000;line-height:20px;height:20px;left:281px;transform:scaleX(0.8921);transform-origin:0 50%;">General</div>
<div class="t" id="t27" style="top:330.09px;font-size:15.6px;color:#000;line-height:20px;height:20px;left:346px;transform:scaleX(0.9020);transform-origin:0 50%;">Details</div>
<div class="t" id="t28" style="top:370.09px;font-size:15.6px;color:#000;line-height:20px;height:20px;left:307.5px;transform:scaleX(0.9324);transform-origin:0 50%;">Friendly View</div>
<div class="t" id="t29" style="top:370.09px;font-size:15.6px;color:#000;line-height:20px;height:20px;left:457px;transform:scaleX(0.9229);transform-origin:0 50%;">XML View</div>
<div class="t" id="t30" style="top:108.09px;font-size:15.6px;color:#000;line-height:20px;height:20px;font-weight:700;left:1060px;transform:scaleX(0.8874);transform-origin:0 50%;">Actions</div>
<div class="t" id="t31" style="top:138.09px;font-size:15.6px;color:#000;line-height:20px;height:20px;left:1062.5px;transform:scaleX(0.9893);transform-origin:0 50%;">Microsoft-Windows-Termi...</div>
<div class="t" id="t32" style="top:168.09px;font-size:15.6px;color:#000;line-height:20px;height:20px;left:1092.5px;transform:scaleX(0.9074);transform-origin:0 50%;">Open Saved Log...</div>
<div class="t" id="t33" style="top:198.09px;font-size:15.6px;color:#000;line-height:20px;height:20px;left:1092.5px;transform:scaleX(0.9331);transform-origin:0 50%;">Create Custom View...</div>
<div class="t" id="t34" style="top:228.09px;font-size:15.6px;color:#000;line-height:20px;height:20px;left:1092.5px;transform:scaleX(0.9655);transform-origin:0 50%;">Import Custom View...</div>
<div class="t" id="t35" style="top:258.09px;font-size:15.6px;color:#000;line-height:20px;height:20px;left:1092.5px;transform:scaleX(0.9342);transform-origin:0 50%;">Filter Current Log...</div>
<div class="t" id="t36" style="top:288.09px;font-size:15.6px;color:#000;line-height:20px;height:20px;left:1092.5px;transform:scaleX(0.9115);transform-origin:0 50%;">Clear Filter</div>
<div class="t" id="t37" style="top:318.09px;font-size:15.6px;color:#000;line-height:20px;height:20px;left:1092.5px;transform:scaleX(0.9286);transform-origin:0 50%;">Properties</div>
<div class="t" id="t38" style="top:348.09px;font-size:15.6px;color:#000;line-height:20px;height:20px;left:1092.5px;transform:scaleX(0.9113);transform-origin:0 50%;">Find...</div>
<div class="t" id="t39" style="top:379.09px;font-size:15.6px;color:#000;line-height:20px;height:20px;left:1092.5px;transform:scaleX(0.9072);transform-origin:0 50%;">Save Filtered Log File A...</div>
<div class="t" id="t40" style="top:408.09px;font-size:15.6px;color:#000;line-height:20px;height:20px;left:1092.5px;transform:scaleX(0.9207);transform-origin:0 50%;">Save Filter to Custom ...</div>
<div class="t" id="t41" style="top:440.09px;font-size:15.6px;color:#000;line-height:20px;height:20px;left:1092.5px;transform:scaleX(0.9245);transform-origin:0 50%;">View</div>
<div class="t" id="t42" style="top:472.09px;font-size:15.6px;color:#000;line-height:20px;height:20px;left:1092.5px;transform:scaleX(0.9095);transform-origin:0 50%;">Delete</div>
<div class="t" id="t43" style="top:502.09px;font-size:15.6px;color:#000;line-height:20px;height:20px;left:1092.5px;transform:scaleX(0.8990);transform-origin:0 50%;">Rename</div>
<div class="t" id="t44" style="top:531.09px;font-size:15.6px;color:#000;line-height:20px;height:20px;left:1092.5px;transform:scaleX(0.8790);transform-origin:0 50%;">Refresh</div>
<div class="t" id="t45" style="top:561.09px;font-size:15.6px;color:#000;line-height:20px;height:20px;left:1092.5px;transform:scaleX(0.9508);transform-origin:0 50%;">Help</div>
<div class="t" id="t46" style="top:600.09px;font-size:15.6px;color:#000;line-height:20px;height:20px;left:1062.2px;transform:scaleX(0.9141);transform-origin:0 50%;">Event 1149, TerminalService...</div>
<div class="t" id="t47" style="top:630.09px;font-size:15.6px;color:#000;line-height:20px;height:20px;left:1092.4px;transform:scaleX(0.9195);transform-origin:0 50%;">Event Properties</div>
<div class="t" id="t48" style="top:660.09px;font-size:15.6px;color:#000;line-height:20px;height:20px;left:1092.4px;transform:scaleX(0.9476);transform-origin:0 50%;">Copy</div>
<div class="t" id="t49" style="top:690.09px;font-size:15.6px;color:#000;line-height:20px;height:20px;left:1092.4px;transform:scaleX(0.8800);transform-origin:0 50%;">Save Selected Events...</div>
<div class="t" id="t50" style="top:721.09px;font-size:15.6px;color:#000;line-height:20px;height:20px;left:1092.4px;transform:scaleX(0.8790);transform-origin:0 50%;">Refresh</div>
<div class="t" id="t51" style="top:752.09px;font-size:15.6px;color:#000;line-height:20px;height:20px;left:1092.4px;transform:scaleX(0.9508);transform-origin:0 50%;">Help</div>
<div class="t" id="x0" style="top:388.63px;font-size:15.5px;color:#0000ff;line-height:21px;height:21px;letter-spacing:0.012px;left:358px;clip-path:inset(17.37px 0 0 0);transform:scaleX(1.0800);transform-origin:0 50%;">&lt;</div>
<div class="t" id="x1" style="top:388.63px;font-size:15.5px;color:#990000;line-height:21px;height:21px;left:367.8px;clip-path:inset(17.37px 0 0 0);transform:scaleX(1.1343);transform-origin:0 50%;">Keywords</div>
<div class="t" id="x2" style="top:388.63px;font-size:15.5px;color:#0000ff;line-height:21px;height:21px;letter-spacing:2.144px;left:447px;clip-path:inset(17.37px 0 0 0);transform:scaleX(1.1600);transform-origin:0 50%;">&gt;</div>
<div class="t" id="x3" style="top:388.63px;font-size:15.5px;color:#000000;line-height:21px;height:21px;font-weight:700;letter-spacing:0.183px;left:458px;clip-path:inset(17.37px 0 0 0);transform:scaleX(1.3000);transform-origin:0 50%;">0x1000000000000000</div>
<div class="t" id="x4" style="top:388.63px;font-size:15.5px;color:#0000ff;line-height:21px;height:21px;letter-spacing:1.320px;left:664px;clip-path:inset(17.37px 0 0 0);transform:scaleX(1.2500);transform-origin:0 50%;">&lt;/</div>
<div class="t" id="x5" style="top:388.63px;font-size:15.5px;color:#990000;line-height:21px;height:21px;left:684px;clip-path:inset(17.37px 0 0 0);transform:scaleX(1.0872);transform-origin:0 50%;">Keywords</div>
<div class="t" id="x6" style="top:388.63px;font-size:15.5px;color:#0000ff;line-height:21px;height:21px;letter-spacing:2.144px;left:760px;clip-path:inset(17.37px 0 0 0);transform:scaleX(1.1600);transform-origin:0 50%;">&gt;</div>
<div class="t" id="x7" style="top:409.63px;font-size:15.5px;color:#0000ff;line-height:21px;height:21px;letter-spacing:0.012px;left:358px;transform:scaleX(1.0800);transform-origin:0 50%;">&lt;</div>
<div class="t" id="x8" style="top:409.63px;font-size:15.5px;color:#990000;line-height:21px;height:21px;left:367.8px;transform:scaleX(1.1667);transform-origin:0 50%;">TimeCreated SystemTime</div>
<div class="t" id="x9" style="top:409.63px;font-size:15.5px;color:#0000ff;line-height:21px;height:21px;left:576.5px;transform:scaleX(1.3391);transform-origin:0 50%;">=&quot;</div>
<div class="t" id="x10" style="top:409.63px;font-size:15.5px;color:#000000;line-height:21px;height:21px;font-weight:700;letter-spacing:0.129px;left:596px;transform:scaleX(1.3000);transform-origin:0 50%;">2024-03-</div>
<div class="t" id="x11" style="top:431.63px;font-size:15.5px;color:#000000;line-height:21px;height:21px;font-weight:700;left:374.5px;transform:scaleX(1.2686);transform-origin:0 50%;">15T03:03:44.163313100Z</div>
<div class="t" id="x12" style="top:431.63px;font-size:15.5px;color:#0000ff;line-height:21px;height:21px;letter-spacing:0.807px;left:603px;transform:scaleX(1.2500);transform-origin:0 50%;">&quot; /&gt;</div>
<div class="t" id="x13" style="top:451.63px;font-size:15.5px;color:#0000ff;line-height:21px;height:21px;letter-spacing:0.012px;left:358px;transform:scaleX(1.0800);transform-origin:0 50%;">&lt;</div>
<div class="t" id="x14" style="top:451.63px;font-size:15.5px;color:#990000;line-height:21px;height:21px;left:367.8px;transform:scaleX(1.1436);transform-origin:0 50%;">EventRecordID</div>
<div class="t" id="x15" style="top:451.63px;font-size:15.5px;color:#0000ff;line-height:21px;height:21px;letter-spacing:2.144px;left:490px;transform:scaleX(1.1600);transform-origin:0 50%;">&gt;</div>
<div class="t" id="x16" style="top:451.63px;font-size:15.5px;color:#000000;line-height:21px;height:21px;font-weight:700;left:501px;transform:scaleX(1.1594);transform-origin:0 50%;">12</div>
<div class="t" id="x17" style="top:451.63px;font-size:15.5px;color:#0000ff;line-height:21px;height:21px;letter-spacing:1.320px;left:521px;transform:scaleX(1.2500);transform-origin:0 50%;">&lt;/</div>
<div class="t" id="x18" style="top:451.63px;font-size:15.5px;color:#990000;line-height:21px;height:21px;letter-spacing:-0.000px;left:541px;transform:scaleX(1.1417);transform-origin:0 50%;">EventRecordID</div>
<div class="t" id="x19" style="top:451.63px;font-size:15.5px;color:#0000ff;line-height:21px;height:21px;letter-spacing:2.144px;left:663px;transform:scaleX(1.1600);transform-origin:0 50%;">&gt;</div>
<div class="t" id="x20" style="top:472.63px;font-size:15.5px;color:#0000ff;line-height:21px;height:21px;letter-spacing:0.012px;left:358px;transform:scaleX(1.0800);transform-origin:0 50%;">&lt;</div>
<div class="t" id="x21" style="top:472.63px;font-size:15.5px;color:#990000;line-height:21px;height:21px;letter-spacing:0.210px;left:367.8px;transform:scaleX(1.1800);transform-origin:0 50%;">Correlation ActivityID</div>
<div class="t" id="x22" style="top:472.63px;font-size:15.5px;color:#0000ff;line-height:21px;height:21px;left:543px;transform:scaleX(1.3391);transform-origin:0 50%;">=&quot;</div>
<div class="t" id="x23" style="top:472.63px;font-size:15.5px;color:#000000;line-height:21px;height:21px;font-weight:700;letter-spacing:0.187px;left:562.5px;transform:scaleX(1.3000);transform-origin:0 50%;">{f4207a37-3800-49d8-ac61-</div>
<div class="t" id="x24" style="top:493.63px;font-size:15.5px;color:#000000;line-height:21px;height:21px;font-weight:700;letter-spacing:0.049px;left:374.5px;transform:scaleX(1.3000);transform-origin:0 50%;">b6732a120000}</div>
<div class="t" id="x25" style="top:493.63px;font-size:15.5px;color:#0000ff;line-height:21px;height:21px;letter-spacing:0.657px;left:518.75px;transform:scaleX(1.2500);transform-origin:0 50%;">&quot; /&gt;</div>
<div class="t" id="x26" style="top:514.63px;font-size:15.5px;color:#0000ff;line-height:21px;height:21px;letter-spacing:0.012px;left:358px;transform:scaleX(1.0800);transform-origin:0 50%;">&lt;</div>
<div class="t" id="x27" style="top:514.63px;font-size:15.5px;color:#990000;line-height:21px;height:21px;left:367.8px;transform:scaleX(1.1378);transform-origin:0 50%;">Execution ProcessID</div>
<div class="t" id="x28" style="top:514.63px;font-size:15.5px;color:#0000ff;line-height:21px;height:21px;left:531.5px;transform:scaleX(1.3391);transform-origin:0 50%;">=&quot;</div>
<div class="t" id="x29" style="top:514.63px;font-size:15.5px;color:#000000;line-height:21px;height:21px;font-weight:700;letter-spacing:0.321px;left:551px;transform:scaleX(1.3000);transform-origin:0 50%;">8740</div>
<div class="t" id="x30" style="top:514.63px;font-size:15.5px;color:#0000ff;line-height:21px;height:21px;left:597.5px;transform:scaleX(1.2691);transform-origin:0 50%;">&quot;</div>
<div class="t" id="x31" style="top:514.63px;font-size:15.5px;color:#990000;line-height:21px;height:21px;left:604.5px;transform:scaleX(1.1509);transform-origin:0 50%;"> ThreadID</div>
<div class="t" id="x32" style="top:514.63px;font-size:15.5px;color:#0000ff;line-height:21px;height:21px;left:683.5px;transform:scaleX(1.3391);transform-origin:0 50%;">=&quot;</div>
<div class="t" id="x33" style="top:514.63px;font-size:15.5px;color:#000000;line-height:21px;height:21px;font-weight:700;left:703px;transform:scaleX(1.2782);transform-origin:0 50%;">1168</div>
<div class="t" id="x34" style="top:514.63px;font-size:15.5px;color:#0000ff;line-height:21px;height:21px;letter-spacing:0.807px;left:746px;transform:scaleX(1.2500);transform-origin:0 50%;">&quot; /&gt;</div>
<div class="t" id="x35" style="top:534.63px;font-size:15.5px;color:#0000ff;line-height:21px;height:21px;letter-spacing:0.012px;left:358px;transform:scaleX(1.0800);transform-origin:0 50%;">&lt;</div>
<div class="t" id="x36" style="top:534.63px;font-size:15.5px;color:#990000;line-height:21px;height:21px;left:367.8px;transform:scaleX(1.0944);transform-origin:0 50%;">Channel</div>
<div class="t" id="x37" style="top:534.63px;font-size:15.5px;color:#0000ff;line-height:21px;height:21px;letter-spacing:1.929px;left:433px;transform:scaleX(1.1600);transform-origin:0 50%;">&gt;</div>
<div class="t" id="x38" style="top:534.63px;font-size:15.5px;color:#000000;line-height:21px;height:21px;font-weight:700;left:443.75px;transform:scaleX(1.2315);transform-origin:0 50%;">Microsoft-Windows-TerminalServices-</div>
<div class="t" id="x39" style="top:555.63px;font-size:15.5px;color:#000000;line-height:21px;height:21px;font-weight:700;left:374.5px;transform:scaleX(1.2404);transform-origin:0 50%;">RemoteConnectionManager/Operational</div>
<div class="t" id="x40" style="top:555.63px;font-size:15.5px;color:#0000ff;line-height:21px;height:21px;letter-spacing:1.320px;left:742px;transform:scaleX(1.2500);transform-origin:0 50%;">&lt;/</div>
<div class="t" id="x41" style="top:555.63px;font-size:15.5px;color:#990000;line-height:21px;height:21px;left:762px;transform:scaleX(1.0823);transform-origin:0 50%;">Channel</div>
<div class="t" id="x42" style="top:555.63px;font-size:15.5px;color:#0000ff;line-height:21px;height:21px;letter-spacing:2.144px;left:826.5px;transform:scaleX(1.1600);transform-origin:0 50%;">&gt;</div>
<div class="t" id="x43" style="top:576.63px;font-size:15.5px;color:#0000ff;line-height:21px;height:21px;letter-spacing:0.012px;left:358px;transform:scaleX(1.0800);transform-origin:0 50%;">&lt;</div>
<div class="t" id="x44" style="top:576.63px;font-size:15.5px;color:#990000;line-height:21px;height:21px;left:367.8px;transform:scaleX(1.1343);transform-origin:0 50%;">Computer</div>
<div class="t" id="x45" style="top:576.63px;font-size:15.5px;color:#0000ff;line-height:21px;height:21px;letter-spacing:2.144px;left:447px;transform:scaleX(1.1600);transform-origin:0 50%;">&gt;</div>
<div class="t" id="x46" style="top:576.63px;font-size:15.5px;color:#000000;line-height:21px;height:21px;font-weight:700;left:458px;transform:scaleX(1.1534);transform-origin:0 50%;">DESKTOP-ND6FH5D</div>
<div class="t" id="x47" style="top:576.63px;font-size:15.5px;color:#0000ff;line-height:21px;height:21px;letter-spacing:1.320px;left:632.5px;transform:scaleX(1.2500);transform-origin:0 50%;">&lt;/</div>
<div class="t" id="x48" style="top:576.63px;font-size:15.5px;color:#990000;line-height:21px;height:21px;left:652.5px;transform:scaleX(1.1093);transform-origin:0 50%;">Computer</div>
<div class="t" id="x49" style="top:576.63px;font-size:15.5px;color:#0000ff;line-height:21px;height:21px;letter-spacing:2.144px;left:730px;transform:scaleX(1.1600);transform-origin:0 50%;">&gt;</div>
<div class="t" id="x50" style="top:597.63px;font-size:15.5px;color:#0000ff;line-height:21px;height:21px;letter-spacing:0.012px;left:358px;transform:scaleX(1.0800);transform-origin:0 50%;">&lt;</div>
<div class="t" id="x51" style="top:597.63px;font-size:15.5px;color:#990000;line-height:21px;height:21px;left:367.8px;transform:scaleX(1.1582);transform-origin:0 50%;">Security UserID</div>
<div class="t" id="x52" style="top:597.63px;font-size:15.5px;color:#0000ff;line-height:21px;height:21px;left:493.5px;transform:scaleX(1.3391);transform-origin:0 50%;">=&quot;</div>
<div class="t" id="x53" style="top:597.63px;font-size:15.5px;color:#000000;line-height:21px;height:21px;font-weight:700;letter-spacing:0.394px;left:513px;transform:scaleX(1.3000);transform-origin:0 50%;">S-1-5-20</div>
<div class="t" id="x54" style="top:597.63px;font-size:15.5px;color:#0000ff;line-height:21px;height:21px;letter-spacing:0.607px;left:595.5px;transform:scaleX(1.2500);transform-origin:0 50%;">&quot; /&gt;</div>
<div class="t" id="x55" style="top:618.63px;font-size:15.5px;color:#0000ff;line-height:21px;height:21px;letter-spacing:0.360px;left:343px;transform:scaleX(1.2500);transform-origin:0 50%;">&lt;/</div>
<div class="t" id="x56" style="top:618.63px;font-size:15.5px;color:#990000;line-height:21px;height:21px;left:360.6px;transform:scaleX(1.1395);transform-origin:0 50%;">System</div>
<div class="t" id="x57" style="top:618.63px;font-size:15.5px;color:#0000ff;line-height:21px;height:21px;letter-spacing:2.144px;left:421.5px;transform:scaleX(1.1600);transform-origin:0 50%;">&gt;</div>
<div class="t" id="x58" style="top:640.63px;font-size:15.5px;color:#ff0000;line-height:21px;height:21px;left:324.5px;transform:scaleX(0.8696);transform-origin:0 50%;">–</div>
<div class="t" id="x59" style="top:640.63px;font-size:15.5px;color:#0000ff;line-height:21px;height:21px;letter-spacing:0.012px;left:341.75px;transform:scaleX(1.0800);transform-origin:0 50%;">&lt;</div>
<div class="t" id="x60" style="top:640.63px;font-size:15.5px;color:#990000;line-height:21px;height:21px;left:351.55px;transform:scaleX(1.1143);transform-origin:0 50%;">UserData</div>
<div class="t" id="x61" style="top:640.63px;font-size:15.5px;color:#0000ff;line-height:21px;height:21px;letter-spacing:2.144px;left:426.5px;transform:scaleX(1.1600);transform-origin:0 50%;">&gt;</div>
<div class="t" id="x62" style="top:660.63px;font-size:15.5px;color:#ff0000;line-height:21px;height:21px;left:341px;transform:scaleX(0.9275);transform-origin:0 50%;">–</div>
<div class="t" id="x63" style="top:660.63px;font-size:15.5px;color:#0000ff;line-height:21px;height:21px;letter-spacing:0.012px;left:358px;transform:scaleX(1.0800);transform-origin:0 50%;">&lt;</div>
<div class="t" id="x64" style="top:660.63px;font-size:15.5px;color:#990000;line-height:21px;height:21px;left:367.8px;transform:scaleX(1.1494);transform-origin:0 50%;">EventXML</div>
<div class="t" id="x65" style="top:660.63px;font-size:15.5px;color:#ff0000;line-height:21px;height:21px;left:450px;transform:scaleX(1.0492);transform-origin:0 50%;"> xmlns</div>
<div class="t" id="x66" style="top:660.63px;font-size:15.5px;color:#0000ff;line-height:21px;height:21px;left:497px;transform:scaleX(1.3734);transform-origin:0 50%;">=&quot;</div>
<div class="t" id="x67" style="top:660.63px;font-size:15.5px;color:#ff0000;line-height:21px;height:21px;font-weight:700;left:517px;transform:scaleX(1.2228);transform-origin:0 50%;">Event_NS</div>
<div class="t" id="x68" style="top:660.63px;font-size:15.5px;color:#0000ff;line-height:21px;height:21px;letter-spacing:0.000px;left:605.5px;transform:scaleX(1.1811);transform-origin:0 50%;">&quot;&gt;</div>
<div class="t" id="x69" style="top:682.63px;font-size:15.5px;color:#0000ff;line-height:21px;height:21px;letter-spacing:0.012px;left:375.75px;transform:scaleX(1.0800);transform-origin:0 50%;">&lt;</div>
<div class="t" id="x70" style="top:682.63px;font-size:15.5px;color:#990000;line-height:21px;height:21px;left:385.55px;transform:scaleX(1.0584);transform-origin:0 50%;">Param1</div>
<div class="t" id="x71" style="top:682.63px;font-size:15.5px;color:#0000ff;line-height:21px;height:21px;letter-spacing:2.144px;left:445px;transform:scaleX(1.1600);transform-origin:0 50%;">&gt;</div>
<div class="t" id="x72" style="top:682.63px;font-size:15.5px;color:#000000;line-height:21px;height:21px;font-weight:700;left:456px;transform:scaleX(1.2223);transform-origin:0 50%;">letsdefend</div>
<div class="t" id="x73" style="top:682.63px;font-size:15.5px;color:#0000ff;line-height:21px;height:21px;letter-spacing:1.420px;left:550.75px;transform:scaleX(1.2500);transform-origin:0 50%;">&lt;/</div>
<div class="t" id="x74" style="top:682.63px;font-size:15.5px;color:#990000;line-height:21px;height:21px;left:571px;transform:scaleX(1.0777);transform-origin:0 50%;">Param1</div>
<div class="t" id="x75" style="top:682.63px;font-size:15.5px;color:#0000ff;line-height:21px;height:21px;letter-spacing:2.144px;left:631.5px;transform:scaleX(1.1600);transform-origin:0 50%;">&gt;</div>
<div class="t" id="x76" style="top:703.63px;font-size:15.5px;color:#0000ff;line-height:21px;height:21px;letter-spacing:0.012px;left:375.75px;transform:scaleX(1.0800);transform-origin:0 50%;">&lt;</div>
<div class="t" id="x77" style="top:703.63px;font-size:15.5px;color:#990000;line-height:21px;height:21px;left:385.55px;transform:scaleX(1.0584);transform-origin:0 50%;">Param2</div>
<div class="t" id="x78" style="top:703.63px;font-size:15.5px;color:#0000ff;line-height:21px;height:21px;letter-spacing:1.176px;left:443px;transform:scaleX(1.2500);transform-origin:0 50%;"> /&gt;</div>
<div class="t" id="x79" style="top:724.63px;font-size:15.5px;color:#0000ff;line-height:21px;height:21px;letter-spacing:0.012px;left:375.75px;transform:scaleX(1.0800);transform-origin:0 50%;">&lt;</div>
<div class="t" id="x80" style="top:724.63px;font-size:15.5px;color:#990000;line-height:21px;height:21px;left:385.55px;transform:scaleX(1.0584);transform-origin:0 50%;">Param3</div>
<div class="t" id="x81" style="top:724.63px;font-size:15.5px;color:#0000ff;line-height:21px;height:21px;letter-spacing:2.144px;left:445px;transform:scaleX(1.1600);transform-origin:0 50%;">&gt;</div>
<div class="t" id="x82" style="top:724.63px;font-size:15.5px;color:#000000;line-height:21px;height:21px;font-weight:700;letter-spacing:0.067px;left:456px;transform:scaleX(1.3000);transform-origin:0 50%;">172.17.79.132</div>
<div class="t" id="x83" style="top:724.63px;font-size:15.5px;color:#0000ff;line-height:21px;height:21px;letter-spacing:1.320px;left:586px;transform:scaleX(1.2500);transform-origin:0 50%;">&lt;/</div>
<div class="t" id="x84" style="top:724.63px;font-size:15.5px;color:#990000;line-height:21px;height:21px;left:606px;transform:scaleX(1.0777);transform-origin:0 50%;">Param3</div>
<div class="t" id="x85" style="top:724.63px;font-size:15.5px;color:#0000ff;line-height:21px;height:21px;letter-spacing:2.144px;left:666.5px;transform:scaleX(1.1600);transform-origin:0 50%;">&gt;</div>
<div class="t" id="x86" style="top:745.63px;font-size:15.5px;color:#0000ff;line-height:21px;height:21px;letter-spacing:0.360px;left:359.5px;transform:scaleX(1.2500);transform-origin:0 50%;">&lt;/</div>
<div class="t" id="x87" style="top:745.63px;font-size:15.5px;color:#990000;line-height:21px;height:21px;left:377.1px;transform:scaleX(1.0998);transform-origin:0 50%;">EventXML</div>
<div class="t" id="x88" style="top:745.63px;font-size:15.5px;color:#0000ff;line-height:21px;height:21px;letter-spacing:2.144px;left:457.75px;transform:scaleX(1.1600);transform-origin:0 50%;">&gt;</div>
<div class="t" id="x89" style="top:766.63px;font-size:15.5px;color:#0000ff;line-height:21px;height:21px;letter-spacing:0.360px;left:343px;transform:scaleX(1.2500);transform-origin:0 50%;">&lt;/</div>
<div class="t" id="x90" style="top:766.63px;font-size:15.5px;color:#990000;line-height:21px;height:21px;left:360.6px;transform:scaleX(1.1059);transform-origin:0 50%;">UserData</div>
<div class="t" id="x91" style="top:766.63px;font-size:15.5px;color:#0000ff;line-height:21px;height:21px;letter-spacing:2.144px;left:435px;transform:scaleX(1.1600);transform-origin:0 50%;">&gt;</div>
<div class="t" id="x92" style="top:788.63px;font-size:15.5px;color:#0000ff;line-height:21px;height:21px;letter-spacing:0.360px;left:325.5px;transform:scaleX(1.2500);transform-origin:0 50%;">&lt;/</div>
<div class="t" id="x93" style="top:788.63px;font-size:15.5px;color:#990000;line-height:21px;height:21px;left:343.1px;transform:scaleX(1.1264);transform-origin:0 50%;">Event</div>
<div class="t" id="x94" style="top:788.63px;font-size:15.5px;color:#0000ff;line-height:21px;height:21px;letter-spacing:2.144px;left:389.75px;transform:scaleX(1.1600);transform-origin:0 50%;">&gt;</div>
</div>
</body></html>
